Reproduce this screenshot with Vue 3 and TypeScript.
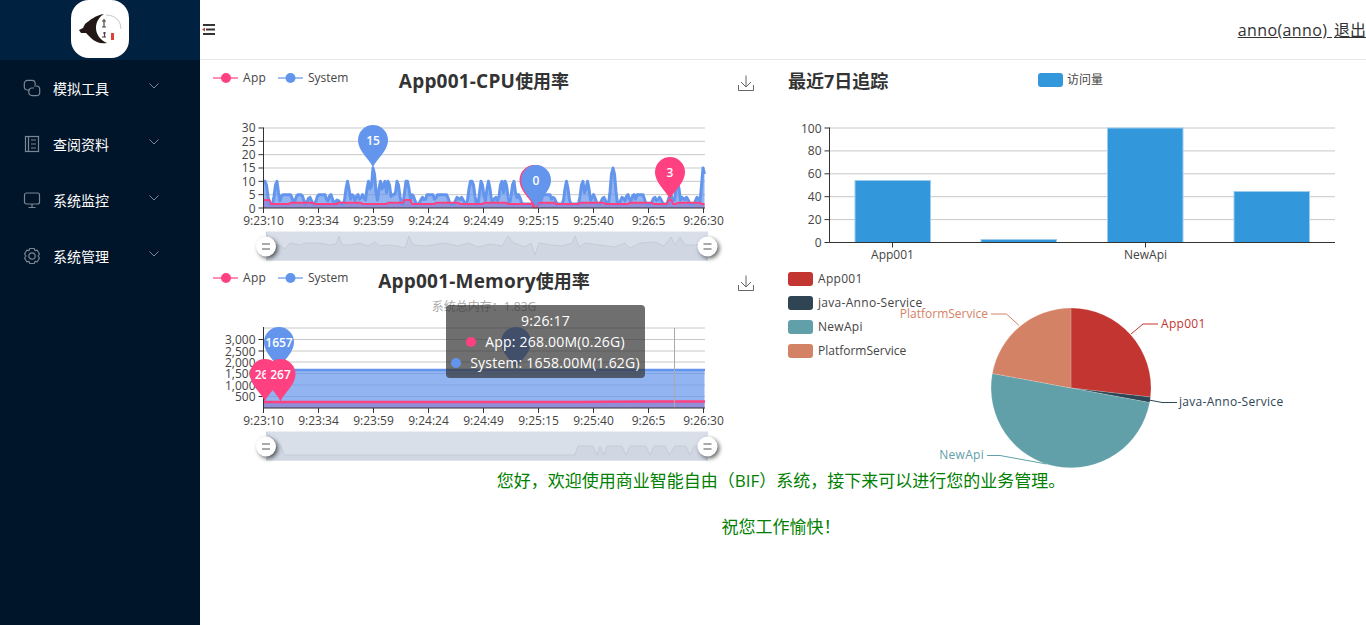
<script setup lang="ts">
type Spike = [number, number, number]

const menu = ['模拟工具', '查阅资料', '系统监控', '系统管理']

const welcome = '您好\uFF0C欢迎使用商业智能自由\uFF08BIF\uFF09系统\uFF0C接下来可以进行您的业务管理。'
const wishes = '祝您工作愉快\uFF01'
const totalMemory = '系统总内存\uFF1A1.83G'

const xLabels = ['9:23:10', '9:23:34', '9:23:59', '9:24:24', '9:24:49', '9:25:15', '9:25:40', '9:26:5', '9:26:30']
const xTicks = xLabels.map((label, i) => ({ label, x: 263.5 + i * 55 }))

const cpuTicks = [30, 25, 20, 15, 10, 5, 0].map((v) => ({ label: String(v), y: 208 - v * 2.667 }))
const memTicks = [
  { label: '3,000', y: 339.5 },
  { label: '2,500', y: 351 },
  { label: '2,000', y: 362 },
  { label: '1,500', y: 373.5 },
  { label: '1,000', y: 385 },
  { label: '500', y: 396.5 },
]
const barTicks = [100, 80, 60, 40, 20, 0].map((v) => ({ label: String(v), y: 242.5 - v * 1.145 }))

// [start x, end x, cpu value] read off the reference
const cpuSpikes: Spike[] = [
  [263, 266, 10], [276, 277, 10], [282, 291, 5], [297, 302, 5], [309, 310, 4], [318, 325, 5], [330, 331, 5],
  [337, 338, 3], [347, 348, 10], [352, 353, 5], [357, 358, 5], [362, 363, 5], [368, 369, 10], [373, 374, 15],
  [380, 381, 10], [384, 385, 10], [388, 389, 10], [392, 397, 5], [397, 398, 10], [406, 408, 10], [412, 413, 5],
  [422, 423, 4], [427, 433, 5], [437, 447, 5], [457, 458, 4], [461, 462, 4], [470, 473, 10], [481, 482, 10],
  [488, 489, 10], [495, 496, 4], [501, 502, 10], [505, 506, 10], [513, 514, 10], [518, 519, 5], [543, 550, 5],
  [553, 554, 4], [566, 567, 10], [582, 583, 10], [587, 588, 10], [593, 594, 5], [603, 604, 4], [612, 614, 15],
  [622, 623, 4], [627, 628, 5], [633, 634, 5], [637, 643, 5], [654, 655, 4], [659, 660, 4], [670, 671, 5],
  [677, 678, 10], [682, 683, 4], [686, 687, 4], [697, 698, 4], [703, 704, 15],
]

function cpuSystem(x: number): number {
  let v = 1.5
  for (const [a, b, h] of cpuSpikes) {
    const d = x < a ? a - x : x > b ? x - b : 0
    if (d < 3) v = Math.max(v, h - (h - 1.5) * (d / 3))
  }
  return v
}

function cpuApp(x: number): number {
  if (x < 270 || (x > 403 && x < 411) || (x > 667 && x < 673)) return 3
  if (x > 533 && x < 538) return 0.3
  return Math.sin(x * 0.13) > 0 ? 2 : 1.5
}

const cpuX: number[] = []
for (let x = 263.5; x <= 704.5; x += 1.5) cpuX.push(x)

const line = (pts: number[][]) => pts.map((p) => p.join(',')).join(' ')
const cpuY = (v: number) => 208 - v * 2.667

const cpuSysPts = cpuX.map((x) => [x, cpuY(cpuSystem(x))])
const cpuAppPts = cpuX.map((x) => [x, cpuY(cpuApp(x))])
const cpuSysLine = line(cpuSysPts)
const cpuAppLine = line(cpuAppPts)
const cpuSysArea = `263.5,208 ${cpuSysLine} 704.5,208`
const cpuAppArea = `263.5,208 ${cpuAppLine} 704.5,208`

function pin(cx: number, cy: number): string {
  return `M${cx} ${cy + 28}C${cx - 2} ${cy + 20} ${cx - 15} ${cy + 12} ${cx - 15} ${cy}A15 15 0 1 1 ${cx + 15} ${cy}C${cx + 15} ${cy + 12} ${cx + 2} ${cy + 20} ${cx} ${cy + 28}Z`
}

const cpuPins = [
  { x: 373, y: 140, color: '#6495ed', label: '15' },
  { x: 534.5, y: 180, color: '#ff4081', label: '' },
  { x: 670, y: 172, color: '#ff4081', label: '3' },
  { x: 536, y: 180, color: '#6495ed', label: '0' },
]
const memPins = [
  { x: 516, y: 342, color: '#6495ed', label: '' },
  { x: 279, y: 342, color: '#6495ed', label: '1657' },
  { x: 265, y: 374, color: '#ff4081', label: '267' },
  { x: 280.5, y: 374, color: '#ff4081', label: '267' },
]

// overview shape inside the two range sliders
const cpuMini: number[][] = [
  [266, 232], [270, 243], [281, 246], [285, 249], [290, 243], [300, 245], [305, 243], [320, 243], [330, 245],
  [336, 244], [339, 236], [342, 245], [350, 245], [360, 243], [368, 246], [375, 242], [380, 246], [388, 245],
  [398, 246], [405, 248], [409, 236], [413, 245], [425, 246], [445, 243], [458, 246], [468, 243], [478, 247],
  [490, 244], [502, 246], [508, 236], [514, 243], [525, 247], [531, 243], [535, 255], [539, 243], [552, 245],
  [562, 246], [572, 243], [575, 236], [579, 247], [585, 243], [600, 245], [615, 247], [625, 243], [630, 248],
  [640, 243], [655, 242], [664, 246], [671, 237], [675, 245], [680, 237], [685, 245], [695, 245], [708, 243],
]
const cpuMiniLine = line(cpuMini)
const cpuMiniArea = `266,260.5 ${cpuMiniLine} 708,260.5`

const memMini: number[][] = [
  [266, 432], [281, 446], [284, 455], [575, 455], [578, 446], [593, 446], [597, 455], [600, 446], [604, 455],
  [607, 446], [622, 446], [626, 455], [630, 446], [646, 446], [650, 455], [654, 446], [665, 446], [669, 455],
  [675, 446], [686, 446], [690, 455], [694, 446], [708, 446],
]
const memMiniLine = line(memMini)
const memMiniArea = `266,460.5 ${memMiniLine} 708,460.5`

const bars = [
  { x: 855, top: 180.5 },
  { x: 981, top: 239.5 },
  { x: 1107.5, top: 128 },
  { x: 1234, top: 191.5 },
]
const barLabels = [
  { label: 'App001', x: 892.5 },
  { label: 'NewApi', x: 1145.5 },
]

const pieLegend = [
  { label: 'App001', color: '#c23531', y: 279, wide: true },
  { label: 'java-Anno-Service', color: '#2f4554', y: 303, wide: true },
  { label: 'NewApi', color: '#61a0a8', y: 327, wide: true },
  { label: 'PlatformService', color: '#d48265', y: 351, wide: false },
]

function slice(from: number, to: number): string {
  const cx = 1071
  const cy = 388
  const r = 80
  const p = (a: number) => {
    const rad = (a * Math.PI) / 180
    return `${(cx + r * Math.sin(rad)).toFixed(2)} ${(cy - r * Math.cos(rad)).toFixed(2)}`
  }
  return `M${cx} ${cy}L${p(from)}A${r} ${r} 0 ${to - from > 180 ? 1 : 0} 1 ${p(to)}Z`
}

const pieSlices = [
  { d: slice(0, 96.5), color: '#c23531' },
  { d: slice(96.5, 100.5), color: '#2f4554' },
  { d: slice(100.5, 280.5), color: '#61a0a8' },
  { d: slice(280.5, 360), color: '#d48265' },
]
const pieLabels = [
  { pts: '1131,334 1143,324 1158,324', color: '#c23531', text: 'App001', x: 1161, y: 323.5, anchor: 'start', wide: true },
  { pts: '1149,400 1162,402.5 1177,402.5', color: '#2f4554', text: 'java-Anno-Service', x: 1179, y: 401.5, anchor: 'start', wide: true },
  { pts: '1046.5,464 1000,455.5 987,455.5', color: '#61a0a8', text: 'NewApi', x: 984, y: 454.5, anchor: 'end', wide: true },
  { pts: '1019,325.5 1006.5,314 991,314', color: '#d48265', text: 'PlatformService', x: 988, y: 313.5, anchor: 'end', wide: false },
]
</script>

<template>
  <div class="layout">
    <aside class="sider">
      <div class="logo-bar">
        <div class="logo">
          <svg width="58" height="58" viewBox="0 0 58 58">
            <path d="M33 14C25 15 19 20 14 24L12 28L8 30L10 33L15 33L20 38C24 42 29 44 36 43C29 40 25 34 25 28C25 22 28 17 33 14Z" fill="#231815" />
            <path d="M35 15C44 15 50 21 50 29" fill="none" stroke="#c9c5c2" stroke-width="1" />
            <path d="M31 21h4M33 19v8M31 27h4M32 33h3M33.500 32v5M31 37h4" stroke="#4a4240" stroke-width="1.200" fill="none" />
            <rect x="40" y="33" width="3" height="7" fill="#e0403a" />
          </svg>
        </div>
      </div>
      <ul class="menu">
        <li v-for="(name, i) in menu" :key="name" class="menu-item">
          <svg class="menu-icon" width="18" height="18" viewBox="0 0 18 18" fill="none" stroke="#7a8694" stroke-width="1.200">
            <template v-if="i === 0">
              <path d="M7 11H4.500A3.200 3.200 0 0 1 1.300 7.800V4.600A3.200 3.200 0 0 1 4.500 1.400H9A3.200 3.200 0 0 1 12.200 4.600V6" />
              <path d="M11 7H13.500A3.200 3.200 0 0 1 16.700 10.200V13.400A3.200 3.200 0 0 1 13.500 16.600H9A3.200 3.200 0 0 1 5.800 13.400V12A3 3 0 0 1 8.800 9H11" />
            </template>
            <template v-else-if="i === 1">
              <rect x="2.500" y="1.500" width="13" height="15" />
              <path d="M5.500 1.500V16.500M8 5H13M8 9H13M8 13H13" />
            </template>
            <template v-else-if="i === 2">
              <rect x="1.500" y="2" width="15" height="11" rx="2" />
              <path d="M9 13V16M5.500 16.500H12.500" />
            </template>
            <template v-else>
              <path d="M6.800 1.500H11.200L12 3.600L14.200 3.200L16.500 7L15 9L16.500 11L14.200 14.800L12 14.400L11.200 16.500H6.800L6 14.400L3.800 14.800L1.500 11L3 9L1.500 7L3.800 3.200L6 3.600Z" stroke-linejoin="round" />
              <circle cx="9" cy="9" r="3.200" />
            </template>
          </svg>
          <span>{{ name }}</span>
          <svg class="menu-arrow" width="10" height="6" viewBox="0 0 10 6" fill="none" stroke="#7a8694" stroke-width="1">
            <path d="M0.500 0.500L5 5L9.500 0.500" />
          </svg>
        </li>
      </ul>
    </aside>

    <div class="main">
      <header class="topbar">
        <svg class="fold" width="14" height="12" viewBox="0 0 14 12">
          <path d="M2 1H14M5 5.500H14M2 10H14" stroke="#333" stroke-width="2" />
          <path d="M4 3.500L1 5.500L4 7.500Z" fill="#b3443c" />
        </svg>
        <div class="user">
          <a href="#" class="user-link user-name">anno(anno)&nbsp;</a>
          <a href="#" class="user-link">退出</a>
        </div>
      </header>

      <section class="charts">
        <div class="card">
          <svg class="chart" viewBox="200 60 583 200" width="583" height="200">
            <path d="M213 78H238" stroke="#ff4081" stroke-opacity="0.6" stroke-width="2" />
            <circle cx="226" cy="78" r="5" fill="#ff4081" />
            <text x="243" y="77.500" class="t12 mid wide">App</text>
            <path d="M278 78H303" stroke="#6495ed" stroke-opacity="0.6" stroke-width="2" />
            <circle cx="290.500" cy="78" r="5" fill="#6495ed" />
            <text x="308" y="77.500" class="t12 mid">System</text>
            <text x="484" y="80.500" class="title mid" text-anchor="middle"><tspan class="title-latin">App001-CPU</tspan>使用率</text>
            <path d="M738.500 85V90.500H753.500V85M746 75.500V87M741 82L746 87L751 82" class="save" />

            <path v-for="t in cpuTicks.slice(0, 6)" :key="t.label" :d="`M263.500 ${t.y}H705`" class="grid" />
            <polygon :points="cpuAppArea" fill="#ff4081" fill-opacity="0.7" />
            <polygon :points="cpuSysArea" fill="#6495ed" fill-opacity="0.7" />
            <polyline :points="cpuSysLine" class="series" stroke="#6495ed" stroke-width="3" />
            <polyline :points="cpuAppLine" class="series" stroke="#ff4081" stroke-width="2" />
            <path d="M263.500 127.500V213M263.500 208H705" class="axis" />
            <path v-for="t in cpuTicks" :key="t.label" :d="`M258.500 ${t.y}H263.500`" class="axis" />
            <text v-for="t in cpuTicks" :key="t.label" x="255.500" :y="t.y" class="t12 mid" text-anchor="end">{{ t.label }}</text>
            <path v-for="t in xTicks" :key="t.label" :d="`M${t.x} 208V213`" class="axis" />
            <text v-for="t in xTicks" :key="t.label" :x="t.x" y="220" class="t12 mid" text-anchor="middle">{{ t.label }}</text>
            <g v-for="p in cpuPins" :key="p.x">
              <path :d="pin(p.x, p.y)" :fill="p.color" />
              <text :x="p.x" :y="p.y" class="pin-label mid" text-anchor="middle">{{ p.label }}</text>
            </g>

            <rect x="266" y="231.500" width="442" height="29" fill="#d9dfe9" />
            <polygon :points="cpuMiniArea" fill="#d0d7e2" />
            <polyline :points="cpuMiniLine" class="series" stroke="#c0c8d4" stroke-width="0.800" />
            <g v-for="hx in [266, 707.500]" :key="hx" class="handle">
              <circle :cx="hx" cy="246.500" r="10" fill="#fff" />
              <path :d="`M${hx - 4} 244H${hx + 4}M${hx - 4} 249H${hx + 4}`" stroke="#555" stroke-width="1.200" />
            </g>
          </svg>
        </div>

        <div class="card">
          <svg class="chart" viewBox="783 60 583 200" width="583" height="200">
            <text x="788" y="81" class="title mid">最近7日追踪</text>
            <rect x="1038" y="73" width="25" height="14" rx="3" fill="#3398db" />
            <text x="1067" y="79" class="t12 mid">访问量</text>
            <path v-for="t in barTicks.slice(0, 5)" :key="t.label" :d="`M829.500 ${t.y}H1335`" class="grid" />
            <rect v-for="b in bars" :key="b.x" :x="b.x" :y="b.top" width="75.500" :height="242.500 - b.top" class="bar" />
            <path d="M829.500 127.500V242.500H1335" class="axis" />
            <path v-for="t in barTicks" :key="t.label" :d="`M824.500 ${t.y}H829.500`" class="axis" />
            <path v-for="b in barLabels" :key="b.x" :d="`M${b.x} 242.500V247.500`" class="axis" />
            <text v-for="t in barTicks" :key="t.label" x="821.500" :y="t.y" class="t12 mid" text-anchor="end">{{ t.label }}</text>
            <text v-for="b in barLabels" :key="b.label" :x="b.x" y="254" class="t12 mid" text-anchor="middle">{{ b.label }}</text>
          </svg>
        </div>

        <div class="card">
          <svg class="chart" viewBox="200 260 583 200" width="583" height="200">
            <path d="M213 278H238" stroke="#ff4081" stroke-opacity="0.6" stroke-width="2" />
            <circle cx="226" cy="278" r="5" fill="#ff4081" />
            <text x="243" y="277.500" class="t12 mid wide">App</text>
            <path d="M278 278H303" stroke="#6495ed" stroke-opacity="0.6" stroke-width="2" />
            <circle cx="290.500" cy="278" r="5" fill="#6495ed" />
            <text x="308" y="277.500" class="t12 mid">System</text>
            <text x="484" y="280.500" class="title mid" text-anchor="middle"><tspan class="title-latin">App001-Memory</tspan>使用率</text>
            <text x="484" y="306" class="t12 mid sub" text-anchor="middle">{{ totalMemory }}</text>
            <path d="M738.500 285V290.500H753.500V285M746 275.500V287M741 282L746 287L751 282" class="save" />

            <path d="M263.500 328H705" class="grid" />
            <path v-for="t in memTicks" :key="t.label" :d="`M263.500 ${t.y}H705`" class="grid" />
            <rect x="263.500" y="402" width="441" height="6" fill="#ff4081" fill-opacity="0.7" />
            <rect x="263.500" y="370" width="441" height="38" fill="#6495ed" fill-opacity="0.7" />
            <path d="M263.500 370H705" stroke="#6495ed" stroke-width="2.500" />
            <path d="M263.500 402H575C600 401.300 640 401.300 705 401.500" stroke="#ff4081" stroke-width="2.500" fill="none" />
            <path d="M674.500 328V408" stroke="#aaa" />
            <path d="M263.500 327V413M263.500 408H705" class="axis" />
            <path v-for="t in memTicks" :key="t.label" :d="`M258.500 ${t.y}H263.500`" class="axis" />
            <text v-for="t in memTicks" :key="t.label" x="255.500" :y="t.y" class="t12 mid" text-anchor="end">{{ t.label }}</text>
            <path v-for="t in xTicks" :key="t.label" :d="`M${t.x} 408V413`" class="axis" />
            <text v-for="t in xTicks" :key="t.label" :x="t.x" y="420" class="t12 mid" text-anchor="middle">{{ t.label }}</text>
            <g v-for="p in memPins" :key="p.x">
              <path :d="pin(p.x, p.y)" :fill="p.color" />
              <text :x="p.x" :y="p.y" class="pin-label mid" text-anchor="middle">{{ p.label }}</text>
            </g>

            <rect x="266" y="431.500" width="442" height="29" fill="#d9dfe9" />
            <polygon :points="memMiniArea" fill="#d0d7e2" />
            <polyline :points="memMiniLine" class="series" stroke="#c0c8d4" stroke-width="0.800" />
            <g v-for="hx in [266, 707.500]" :key="hx" class="handle">
              <circle :cx="hx" cy="446.500" r="10" fill="#fff" />
              <path :d="`M${hx - 4} 444H${hx + 4}M${hx - 4} 449H${hx + 4}`" stroke="#555" stroke-width="1.200" />
            </g>
          </svg>
          <div class="tooltip">
            <div>9:26:17</div>
            <div><i class="dot dot-app"></i>App: 268.00M(0.26G)</div>
            <div><i class="dot dot-sys"></i>System: 1658.00M(1.62G)</div>
          </div>
        </div>

        <div class="card">
          <svg class="chart" viewBox="783 260 583 200" width="583" height="200">
            <g v-for="l in pieLegend" :key="l.label">
              <rect x="788" :y="l.y - 7" width="25" height="14" rx="3" :fill="l.color" />
              <text x="818" :y="l.y - 0.5" class="t12 mid" :class="{ wide: l.wide }">{{ l.label }}</text>
            </g>
            <path v-for="s in pieSlices" :key="s.color" :d="s.d" :fill="s.color" stroke="#fff" stroke-opacity="0.35" stroke-width="0.500" />
            <g v-for="l in pieLabels" :key="l.text">
              <polyline :points="l.pts" fill="none" :stroke="l.color" />
              <text :x="l.x" :y="l.y" class="t12 mid" :class="{ wide: l.wide }" :style="{ fill: l.color }" :text-anchor="l.anchor">{{ l.text }}</text>
            </g>
          </svg>
        </div>
      </section>

      <div class="greeting">
        <p>{{ welcome }}</p>
        <p>{{ wishes }}</p>
      </div>
    </div>
  </div>
</template>

<style scoped>
.layout {
  display: flex;
  min-height: 100vh;
  font-family: "Open Sans", "Noto Sans CJK SC", sans-serif;
}

.sider {
  width: 200px;
  flex-shrink: 0;
  background: #001529;
}

.logo-bar {
  height: 60px;
  display: flex;
  justify-content: center;
  background: #002140;
}

.logo {
  width: 58px;
  height: 58px;
  background: #fff;
  border-radius: 18px;
}

.menu {
  list-style: none;
  margin: 0;
  padding: 0;
}

.menu-item {
  position: relative;
  display: flex;
  align-items: center;
  height: 56px;
  padding-left: 23px;
  color: #fff;
  font-size: 14px;
}

.menu-icon {
  margin-right: 12px;
}

.menu-arrow {
  position: absolute;
  left: 149px;
  top: 23px;
}

.main {
  flex: 1;
  min-width: 0;
  overflow: hidden;
}

.topbar {
  height: 59px;
  border-bottom: 1px solid #e6e6e6;
  display: flex;
  align-items: center;
  justify-content: space-between;
  padding-left: 1px;
}

.fold {
  margin-top: 1px;
}

.user {
  font-size: 16px;
  white-space: nowrap;
  color: #333;
  padding-bottom: 2px;
}

.user-link {
  color: #333;
  text-decoration: underline;
}

.user-name {
  letter-spacing: 0.4px;
  margin-right: 2px;
}

.charts {
  display: grid;
  grid-template-columns: 583px 583px;
  grid-auto-rows: 200px;
}

.card {
  position: relative;
}

.chart {
  display: block;
  overflow: visible;
}

.chart text {
  font-family: "Open Sans", "Noto Sans CJK SC", sans-serif;
}

.t12 {
  font-size: 12px;
  fill: #444;
}

.wide {
  letter-spacing: 0.3px;
}

.mid {
  dominant-baseline: central;
}

.sub {
  fill: #aaa;
}

.title {
  font-size: 18px;
  font-weight: 700;
  fill: #333;
}

.title-latin {
  font-size: 19px;
  letter-spacing: 0.2px;
}

.pin-label {
  font-size: 12px;
  fill: #fff;
  font-weight: 600;
}

.save {
  fill: none;
  stroke: #666;
  stroke-width: 1;
}

.grid {
  fill: none;
  stroke: #c8c8c8;
  stroke-width: 1;
}

.axis {
  fill: none;
  stroke: #333;
  stroke-width: 1;
}

.series {
  fill: none;
  stroke-linejoin: round;
}

.bar {
  fill: #3398db;
  stroke: #9ccdef;
  stroke-width: 1;
}

.handle {
  filter: drop-shadow(2px 2px 2px rgba(0, 0, 0, 0.6));
}

.tooltip {
  position: absolute;
  left: 246px;
  top: 45px;
  width: 199px;
  box-sizing: border-box;
  padding: 5px;
  border-radius: 4px;
  background: rgba(50, 50, 50, 0.7);
  color: #fff;
  font-size: 14px;
  line-height: 21px;
  letter-spacing: 0.2px;
  text-align: center;
  white-space: nowrap;
}

.dot {
  display: inline-block;
  width: 10px;
  height: 10px;
  border-radius: 50%;
  margin-right: 9px;
}

.dot-app {
  background: #ff4081;
}

.dot-sys {
  background: #6495ed;
}

.greeting {
  margin-top: 10px;
  padding-right: 4px;
  text-align: center;
  color: #008000;
  font-size: 17px;
  line-height: 21px;
}

.greeting p {
  margin: 0 0 25px;
}
</style>

<style>
html,
body {
  margin: 0;
  background: #fff;
}
</style>
